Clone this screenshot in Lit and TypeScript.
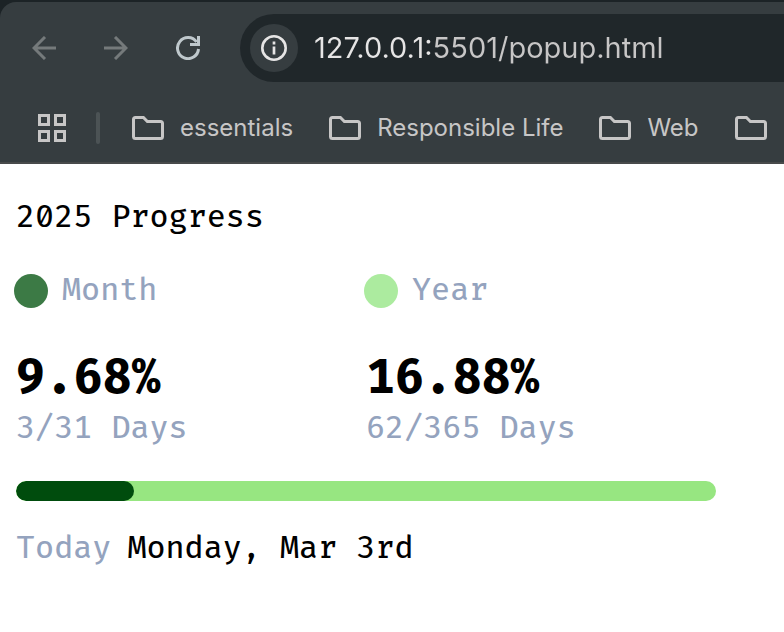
import { LitElement, html, css } from "lit";
import { customElement, property } from "lit/decorators.js";

@customElement("browser-bar")
class BrowserBar extends LitElement {
  @property() url = "127.0.0.1:5501/popup.html";
  @property({ attribute: false }) bookmarks = ["essentials", "Responsible Life", "Web"];

  static styles = css`
    :host {
      display: block;
      background: #1c2326;
      padding-top: 2px;
      font-family: Inter, "Liberation Sans", sans-serif;
    }
    .chrome {
      background: #363d40;
      border-radius: 16px 0 0 0;
      border-bottom: 2px solid #484a4b;
      overflow: hidden;
    }
    .toolbar {
      display: flex;
      align-items: center;
      padding: 12px 0 0 8px;
    }
    button {
      border: 0;
      margin: 0;
      padding: 0;
      background: none;
      color: inherit;
      display: flex;
      align-items: center;
      justify-content: center;
    }
    svg {
      display: block;
      flex: none;
      fill: none;
      stroke: currentColor;
      stroke-width: 3;
    }
    .nav {
      width: 72px;
      height: 48px;
      color: #bfc8cc;
    }
    .nav:disabled {
      color: #757a7b;
    }
    .address {
      flex: 1;
      min-width: 0;
      height: 68px;
      box-sizing: border-box;
      margin-left: 16px;
      padding-left: 10px;
      display: flex;
      align-items: center;
      gap: 16px;
      border-radius: 34px 0 0 34px;
      background: #20272a;
    }
    .info {
      width: 48px;
      height: 48px;
      border-radius: 50%;
      background: #363d40;
      color: #e6e5e5;
      flex: none;
    }
    .url {
      flex: 1;
      min-width: 0;
      height: 48px;
      padding: 0;
      border: 0;
      outline: 0;
      font: 400 29px/48px Inter, "Liberation Sans", sans-serif;
      color: transparent;
      background: linear-gradient(90deg, #e6e5e5 119px, #c7c6c6 119px);
      background-clip: text;
      -webkit-background-clip: text;
    }
    .bookmarks {
      display: flex;
      align-items: center;
      height: 68px;
      padding-left: 38px;
      margin-top: 12px;
      color: #c7c6c6;
    }
    .divider {
      width: 4px;
      height: 32px;
      border-radius: 2px;
      background: #4c5355;
      margin: 0 32px 0 30px;
      flex: none;
    }
    .folders {
      display: flex;
      gap: 36px;
    }
    .folder {
      gap: 16px;
      font: 400 24px/32px Inter, "Liberation Sans", sans-serif;
      white-space: nowrap;
      flex: none;
    }
  `;

  private folderIcon() {
    return html`<svg width="32" height="24" viewBox="0 0 32 24" aria-hidden="true">
      <path d="M1.5 3.5q0-2 2-2h7.9l4 4h13.1q2 0 2 2v13q0 2-2 2h-25q-2 0-2-2z" />
    </svg>`;
  }

  render() {
    return html`
      <header class="chrome">
        <div class="toolbar">
          <button class="nav" aria-label="Back" disabled>
            <svg width="24" height="24" viewBox="0 0 24 24"><path d="M24 12H3M13 1L2 12l11 11" /></svg>
          </button>
          <button class="nav" aria-label="Forward" disabled>
            <svg width="24" height="24" viewBox="0 0 24 24"><path d="M0 12h21M11 1l11 11-11 11" /></svg>
          </button>
          <button class="nav" aria-label="Reload">
            <svg width="24" height="24" viewBox="0 0 24 24">
              <path d="M22.5 13A10.5 10.5 0 1 1 20.6 6" />
              <path d="M22.5 0v8.5H14" />
            </svg>
          </button>
          <div class="address">
            <button class="info" aria-label="View site information">
              <svg width="26" height="26" viewBox="0 0 26 26">
                <circle cx="13" cy="13" r="11.7" stroke-width="2.6" />
                <path d="M13 11.5V19.5M13 6.5v3" stroke-width="2.7" />
              </svg>
            </button>
            <input class="url" type="text" aria-label="Address" spellcheck="false" .value=${this.url} />
          </div>
        </div>
        <nav class="bookmarks" aria-label="Bookmarks">
          <button aria-label="Apps">
            <svg width="28" height="28" viewBox="0 0 28 28">
              <path d="M1.5 1.5h9v9h-9zM17.5 1.5h9v9h-9zM1.5 17.5h9v9h-9zM17.5 17.5h9v9h-9z" />
            </svg>
          </button>
          <span class="divider"></span>
          <div class="folders">
            ${this.bookmarks.map(
              (name) => html`<button class="folder">${this.folderIcon()}<span>${name}</span></button>`
            )}
            <button class="folder" aria-label="More bookmarks">${this.folderIcon()}</button>
          </div>
        </nav>
      </header>
    `;
  }
}

@customElement("progress-stat")
class ProgressStat extends LitElement {
  @property() label = "";
  @property() percent = "";
  @property() days = "";
  @property({ reflect: true }) tone = "month";

  static styles = css`
    :host {
      display: block;
    }
    .label {
      display: flex;
      align-items: center;
      gap: 14px;
      height: 40px;
      color: #94a3be;
    }
    .dot {
      width: 34px;
      height: 34px;
      margin-left: -2px;
      border-radius: 50%;
      background: #3c7a45;
    }
    :host([tone="year"]) .dot {
      background: #aceb9f;
    }
    .percent {
      margin: 38px 0 0;
      font-size: 47px;
      line-height: 60px;
      font-weight: 700;
    }
    .days {
      margin: 0;
      line-height: 40px;
      color: #94a3be;
    }
  `;

  render() {
    return html`
      <div class="label"><span class="dot"></span><span>${this.label}</span></div>
      <p class="percent">${this.percent}</p>
      <p class="days">${this.days}</p>
    `;
  }
}

@customElement("app-root")
class AppRoot extends LitElement {
  static styles = css`
    :host {
      display: block;
      min-height: 100vh;
      background: #fff;
    }
    .popup {
      max-width: 700px;
      padding: 34px 16px;
      font-family: "Fira Code", "DejaVu Sans Mono", monospace;
      font-size: 31px;
      font-weight: 450;
      line-height: 40px;
      color: #000;
    }
    h1 {
      margin: 0;
      font: inherit;
    }
    .stats {
      display: grid;
      grid-template-columns: 1fr 1fr;
      margin-top: 33px;
    }
    progress {
      display: block;
      appearance: none;
      width: 100%;
      height: 20px;
      margin-top: 32px;
      border: 0;
      border-radius: 10px;
      overflow: hidden;
      background: #97e681;
    }
    progress::-webkit-progress-bar {
      background: #97e681;
    }
    progress::-webkit-progress-value {
      background: #004c0d;
      border-radius: 10px;
    }
    .today {
      display: flex;
      gap: 16px;
      margin: 28px 0 0;
    }
    .muted {
      color: #94a3be;
    }
  `;

  render() {
    return html`
      <browser-bar></browser-bar>
      <main class="popup">
        <h1>2025 Progress</h1>
        <section class="stats">
          <progress-stat label="Month" percent="9.68%" days="3/31 Days"></progress-stat>
          <progress-stat tone="year" label="Year" percent="16.88%" days="62/365 Days"></progress-stat>
        </section>
        <progress aria-label="Year progress" max="100" value="16.88"></progress>
        <p class="today"><span class="muted">Today</span><span>Monday, Mar 3rd</span></p>
      </main>
    `;
  }
}
